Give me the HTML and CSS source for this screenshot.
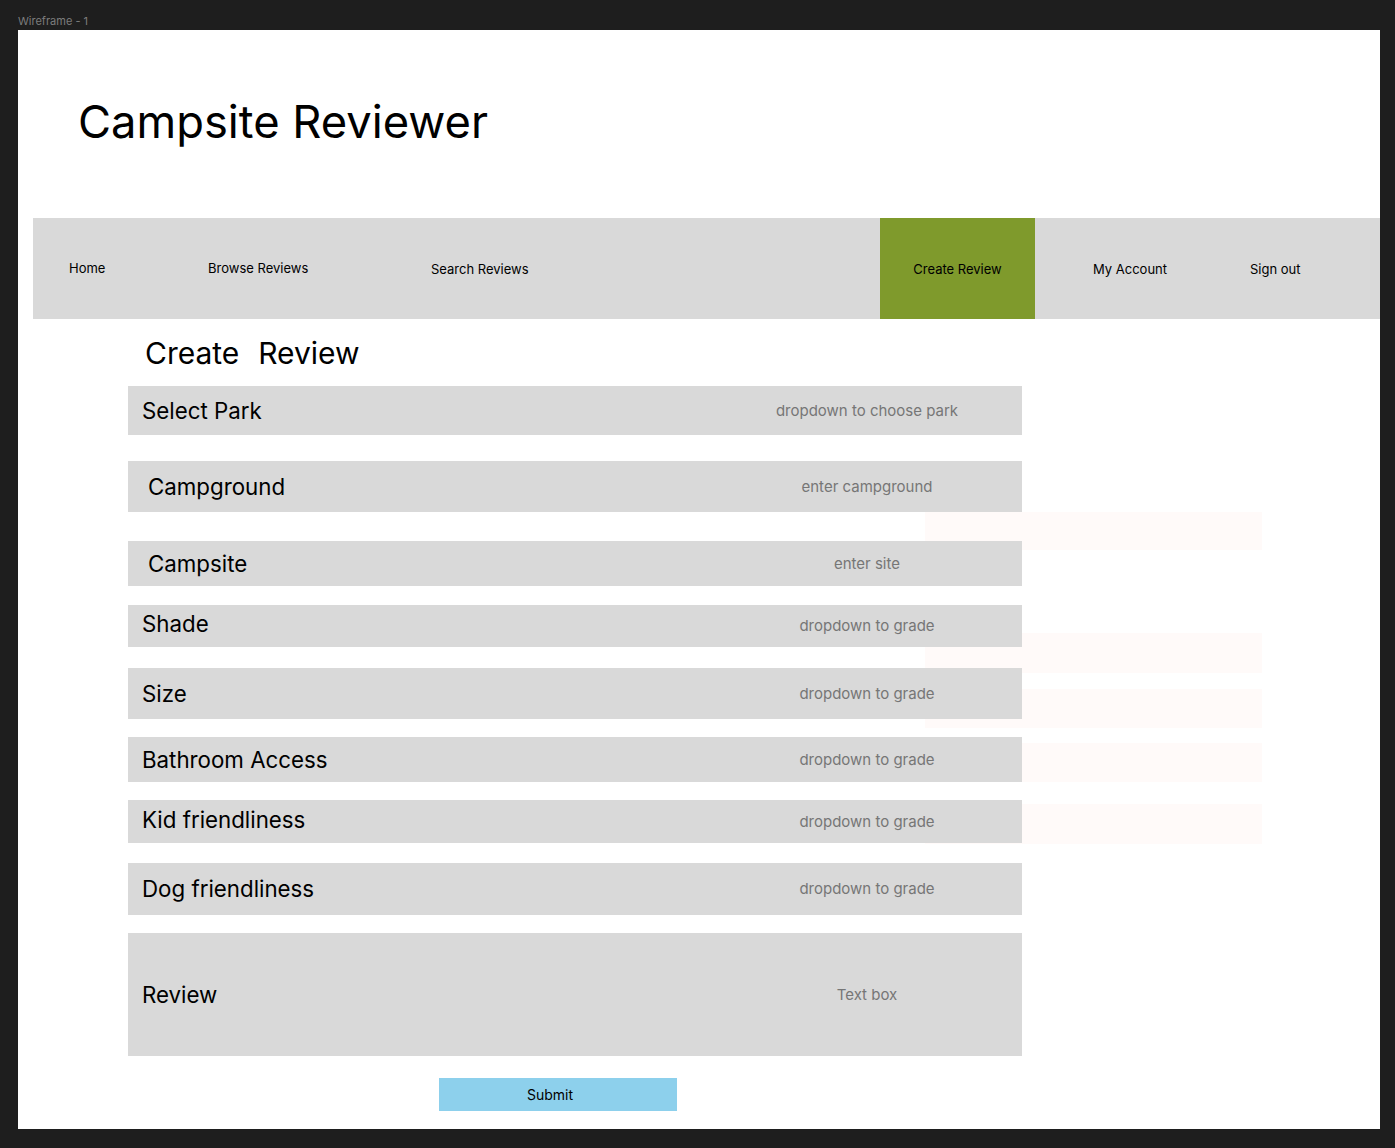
FILE: index.html
```html
<!DOCTYPE html>
<html lang="en">
<head>
<meta charset="utf-8">
<title>Campsite Reviewer</title>
<link rel="stylesheet" href="styles.css">
</head>
<body>
<div class="frame-label">Wireframe - 1</div>
<div class="frame">
  <div class="ghost g1"></div>
  <div class="ghost g2"></div>
  <div class="ghost g3"></div>
  <div class="ghost g4"></div>
  <div class="ghost g5"></div>

  <h1 class="title">Campsite Reviewer</h1>

  <nav class="nav">
    <a class="nav-item home">Home</a>
    <a class="nav-item browse">Browse Reviews</a>
    <a class="nav-item search">Search Reviews</a>
    <a class="nav-item create active">Create Review</a>
    <a class="nav-item account">My Account</a>
    <a class="nav-item signout">Sign out</a>
  </nav>

  <section class="form">
    <h2 class="form-title">Create&nbsp; Review</h2>
    <div class="row r-park"><span class="label">Select Park</span><span class="hint">dropdown to choose park</span></div>
    <div class="row r-ground"><span class="label indent">Campground</span><span class="hint">enter campground</span></div>
    <div class="row r-site"><span class="label indent">Campsite</span><span class="hint">enter site</span></div>
    <div class="row r-shade"><span class="label up">Shade</span><span class="hint">dropdown to grade</span></div>
    <div class="row r-size"><span class="label">Size</span><span class="hint">dropdown to grade</span></div>
    <div class="row r-bath"><span class="label">Bathroom Access</span><span class="hint">dropdown to grade</span></div>
    <div class="row r-kid"><span class="label up">Kid friendliness</span><span class="hint">dropdown to grade</span></div>
    <div class="row r-dog"><span class="label">Dog friendliness</span><span class="hint">dropdown to grade</span></div>
    <div class="row r-review"><span class="label">Review</span><span class="hint">Text box</span></div>
    <button class="submit">Submit</button>
  </section>
</div>
</body>
</html>
```
FILE: styles.css
```css
* { box-sizing: border-box; }
html, body { margin: 0; padding: 0; }
body {
  background: #1e1e1e;
  font-family: Inter, "Noto Sans", sans-serif;
  color: #000;
  height: 1148px;
  overflow: hidden;
}
.frame-label {
  height: 30px;
  padding: 15px 0 0 18px;
  font-size: 11px;
  line-height: 13px;
  color: #7c7c7c;
}
.frame {
  position: relative;
  z-index: 0;
  margin-left: 18px;
  width: 1362px;
  height: 1099px;
  background: #fff;
  overflow: hidden;
}
.ghost {
  position: absolute;
  z-index: -1;
  left: 907px;
  width: 337px;
  background: #fffaf9;
}
.g1 { top: 482px; height: 38px; }
.g2 { top: 603px; height: 40px; }
.g3 { top: 659px; height: 39px; }
.g4 { top: 713px; height: 39px; }
.g5 { top: 774px; height: 40px; }

.title {
  margin: 0;
  padding: 64px 0 0 60px;
  height: 188px;
  font-size: 45.3px;
  line-height: 56px;
  font-weight: 400;
  letter-spacing: 0;
}

.nav {
  display: flex;
  align-items: center;
  margin-left: 15px;
  height: 101px;
  background: #d9d9d9;
  padding-left: 36px;
  font-size: 13px;
}
.nav-item { display: block; line-height: 16px; }
.home { width: 139px; margin-top: -2px; }
.browse { width: 223px; margin-top: -2px; }
.search { width: 449px; }
.create {
  width: 155px;
  height: 101px;
  background: #7f9a2c;
  display: flex;
  align-items: center;
  justify-content: center;
}
.account { margin-left: 58px; width: 157px; }

.form {
  margin-left: 110px;
  width: 894px;
}
.form-title {
  margin: 16px 0 15px 17px;
  font-size: 30px;
  line-height: 36px;
  font-weight: 400;
  word-spacing: 1px;
}
.row {
  display: grid;
  grid-template-columns: 1fr 310px;
  align-items: center;
  background: #d9d9d9;
}
.label {
  padding-left: 14px;
  font-size: 22.3px;
  line-height: 28px;
}
.label.indent { padding-left: 20px; }
.label.up { margin-top: -4px; }
.hint {
  text-align: center;
  font-size: 15px;
  line-height: 20px;
  color: #767676;
}
.r-park { height: 49px; margin-top: 0; }
.r-ground { height: 51px; margin-top: 26px; }
.r-site { height: 45px; margin-top: 29px; }
.r-shade { height: 42px; margin-top: 19px; }
.r-size { height: 51px; margin-top: 21px; }
.r-bath { height: 45px; margin-top: 18px; }
.r-kid { height: 43px; margin-top: 18px; }
.r-dog { height: 52px; margin-top: 20px; }
.r-review { height: 123px; margin-top: 18px; }

.submit {
  display: block;
  margin: 22px 0 0 311px;
  width: 238px;
  height: 33px;
  border: 0;
  background: #8dd0ec;
  font-family: Inter, "Noto Sans", sans-serif;
  font-size: 14px;
  color: #000;
  padding: 0 16px 0 0;
}
```
